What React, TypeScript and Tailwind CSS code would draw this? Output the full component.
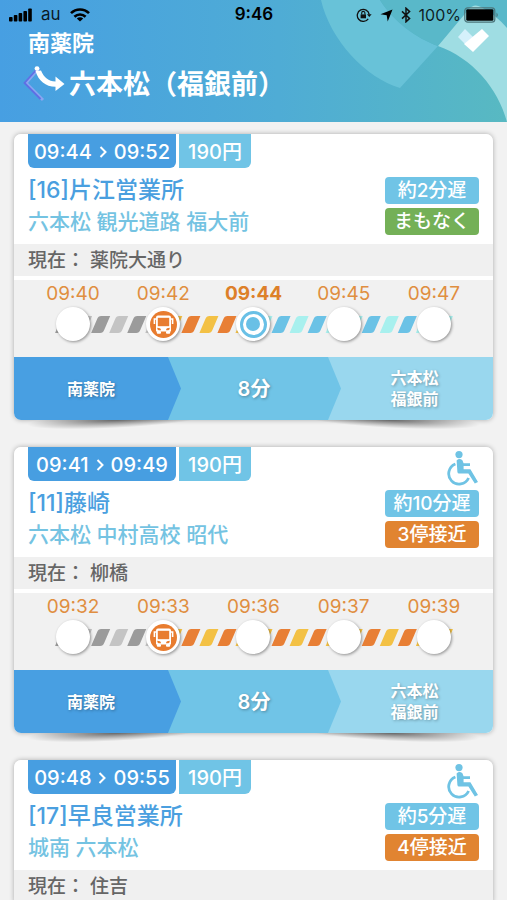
type Stop = {
  time: string;
  bus?: boolean;
  boarding?: boolean;
};

type Trip = {
  departs: string;
  arrives: string;
  fare: string;
  line: string;
  via: string;
  delay: string;
  status: string;
  soon?: boolean;
  wheelchair?: boolean;
  current: string;
  stops?: Stop[];
};

const trips: Trip[] = [
  {
    departs: "09:44",
    arrives: "09:52",
    fare: "190円",
    line: "[16]片江営業所",
    via: "六本松 観光道路 福大前",
    delay: "約2分遅",
    status: "まもなく",
    soon: true,
    current: "薬院大通り",
    stops: [
      { time: "09:40" },
      { time: "09:42", bus: true },
      { time: "09:44", boarding: true },
      { time: "09:45" },
      { time: "09:47" },
    ],
  },
  {
    departs: "09:41",
    arrives: "09:49",
    fare: "190円",
    line: "[11]藤崎",
    via: "六本松 中村高校 昭代",
    delay: "約10分遅",
    status: "3停接近",
    wheelchair: true,
    current: "柳橋",
    stops: [
      { time: "09:32" },
      { time: "09:33", bus: true },
      { time: "09:36" },
      { time: "09:37" },
      { time: "09:39" },
    ],
  },
  {
    departs: "09:48",
    arrives: "09:55",
    fare: "190円",
    line: "[17]早良営業所",
    via: "城南 六本松",
    delay: "約5分遅",
    status: "4停接近",
    wheelchair: true,
    current: "住吉",
  },
];

// [main, alternate] stripe colours
const PASSED = ["#9b9b9b", "#c4c4c4"];
const COMING = ["#e87f35", "#f3c145"];
const AHEAD = ["#6bc2e6", "#a8f0ee"];

function SignalIcon() {
  return (
    <svg viewBox="0 0 23 14" className="h-[14px] w-[23px]" aria-hidden="true">
      <rect x="0" y="9" width="3.6" height="4.5" rx="0.8" />
      <rect x="4.8" y="7" width="3.6" height="6.5" rx="0.8" />
      <rect x="9.6" y="5" width="3.6" height="8.5" rx="0.8" />
      <rect x="14.4" y="3" width="3.6" height="10.5" rx="0.8" />
      <rect x="19.2" y="0.5" width="3.6" height="13" rx="0.8" />
    </svg>
  );
}

function WifiIcon() {
  return (
    <svg viewBox="0 0 20 14" className="h-[14px] w-5" fill="none" stroke="#000" strokeWidth="2.6" aria-hidden="true">
      <path d="M1 5.2C6 0.2 14 0.2 19 5.2" />
      <path d="M4.4 8.8C7.6 5.7 12.4 5.7 15.6 8.8" />
      <path d="M10 13.6L6.8 10.4C8.6 8.8 11.4 8.8 13.2 10.4Z" fill="#000" stroke="none" />
    </svg>
  );
}

function LockIcon() {
  return (
    <svg viewBox="0 0 16 14" className="h-[14px] w-4" fill="none" stroke="#111" strokeWidth="1.3" aria-hidden="true">
      <path d="M12.2 10.8A6 6 0 1 1 13.2 6.4" />
      <path d="M11 6.2H15.6L13.3 9Z" fill="#111" stroke="none" />
      <rect x="4.6" y="6.4" width="5.4" height="3.9" fill="#111" stroke="none" />
      <path d="M5.7 6.4V5A1.6 1.6 0 0 1 8.9 5V6.4" strokeWidth="1.1" />
    </svg>
  );
}

function StatusBar() {
  return (
    <div className="grid h-[30px] grid-cols-3 items-center pr-[8px] pl-[9px] text-[17px] text-black/85">
      <div className="flex items-center gap-[9px]">
        <SignalIcon />
        <span>au</span>
        <WifiIcon />
      </div>
      <div className="text-center font-semibold text-black">9:46</div>
      <div className="flex items-center justify-end">
        <LockIcon />
        <svg viewBox="0 0 14 14" className="ml-2 h-[13px] w-[13px]" fill="#000" aria-hidden="true">
          <path d="M13.5 0.5L8.3 13.5L7.2 6.8L0.5 5.7Z" />
        </svg>
        <svg viewBox="0 0 10 16" className="ml-[6px] h-4 w-[14px]" fill="none" stroke="#111" strokeWidth="1.5" aria-hidden="true">
          <path d="M1 4.4L8.6 11.4L5 14.8V1.2L8.6 4.6L1 11.6" />
        </svg>
        <span className="ml-[6px] text-[16px]">100%</span>
        <svg viewBox="0 0 35 16" className="ml-[3px] h-4 w-[35px] shrink-0" aria-hidden="true">
          <rect x="0.8" y="0.8" width="30" height="14.4" rx="3" fill="none" stroke="#4c757b" strokeWidth="1.2" />
          <rect x="2.2" y="2.2" width="27.2" height="11.6" rx="1.4" />
          <path d="M32.5 5.5Q35 8 32.5 10.5Z" fill="#4c757b" />
        </svg>
      </div>
    </div>
  );
}

function Header() {
  return (
    <header className="relative h-[122px] bg-linear-to-r from-[#479fe2] via-[#4facd5] via-55% to-[#58b9c2] text-white">
      <svg
        viewBox="0 0 187 122"
        className="absolute top-0 right-0 h-[122px] w-[187px]"
        aria-hidden="true"
      >
        <path d="M1 0H60C73 21 96 38 118 46L80 88C46 78 10 40 1 0Z" fill="#68c2d8" />
        <path d="M60 0H187V30L153 6L118 46C96 38 73 21 60 0Z" fill="#59b8c9" />
        <path d="M118 46L149 9Q154 3 161 7Q176 15 187 28V122C178 88 152 58 118 46Z" fill="#9fdde3" />
        <path d="M138 37L145 29L153 37L145 44Z" fill="#d5f1fb" />
        <path d="M144 44L162 29L169 36L153 52Z" fill="#fff" />
      </svg>
      <div className="relative">
        <StatusBar />
        <h1 className="pl-[28px]">
          <span className="block text-[22px] leading-[26px] font-semibold">南薬院</span>
          <span className="flex h-[56px] items-center">
            <button type="button" aria-label="戻る" className="mr-[3px] -ml-[6px]">
              <svg viewBox="0 0 44 36" className="h-9 w-11" aria-hidden="true">
                <path d="M17 2L4 17L21 34" fill="none" stroke="#8aa6f0" strokeWidth="3" />
                <path d="M15 3L2.5 17L18.5 33" fill="none" stroke="#5f6fe4" strokeWidth="1.8" />
                <circle cx="15" cy="2.6" r="2.4" fill="#fff" />
                <path d="M13.5 5L19 4.4C22 11.5 26.5 15 33.5 15.6V10.6L42.5 18L33.5 25V20.8C23.5 20.6 16.5 15 13.5 5Z" fill="#fff" />
              </svg>
            </button>
            <span className="pt-[2px] text-[27px] leading-[40px] font-semibold">六本松（福銀前）</span>
          </span>
        </h1>
      </div>
    </header>
  );
}

function WheelchairIcon() {
  return (
    <svg viewBox="0 0 34 36" className="h-9 w-[34px]" fill="none" stroke="#6fc3e4" role="img" aria-label="車いす対応">
      <circle cx="14" cy="4.6" r="3.6" fill="#6fc3e4" stroke="none" />
      <path d="M10.4 14A10.4 10.4 0 1 0 23.6 28" strokeWidth="2.8" />
      <path d="M11.6 10.4Q14.4 7.8 17.4 10.2L18.6 13.2H25V16H18.6V19.2H25.4L33 32L29.8 33.6L23.4 23.6H14Q12.6 23.6 12.4 22Z" fill="#6fc3e4" stroke="none" />
    </svg>
  );
}

function BusIcon() {
  return (
    <svg viewBox="0 0 27 27" className="h-[27px] w-[27px]" role="img" aria-label="バス">
      <circle cx="13.5" cy="13.5" r="13.5" fill="#e87c2f" />
      <path d="M6 6.5Q6 4.6 8 4.6H19Q21 4.6 21 6.5V20.6H6Z" fill="#fff" />
      <rect x="7.8" y="6.8" width="11.4" height="8.4" fill="#e87c2f" />
      <path d="M6 8H4.4V13M21 8H22.6V13" fill="none" stroke="#fff" strokeWidth="1.6" />
      <rect x="6.8" y="20" width="4.2" height="2.8" rx="1" fill="#fff" />
      <rect x="16" y="20" width="4.2" height="2.8" rx="1" fill="#fff" />
      <path d="M7.2 16.8Q10.8 16.8 11 19.2H8.6Q7.2 19.2 7.2 16.8Z" fill="#e87c2f" />
      <path d="M19.8 16.8Q16.2 16.8 16 19.2H18.4Q19.8 19.2 19.8 16.8Z" fill="#e87c2f" />
    </svg>
  );
}

function Track({ stops }: { stops: Stop[] }) {
  const bus = stops.findIndex((s) => s.bus);
  const boarding = stops.findIndex((s) => s.boarding);
  const lastComing = boarding === -1 ? stops.length : boarding;

  const stripes = [{ x: 27, color: PASSED[0] }];
  stops.forEach((_, i) => {
    const colors = i < bus ? PASSED : i < lastComing ? COMING : AHEAD;
    const count = i === stops.length - 1 ? 1 : 5;
    for (let n = 0; n < count; n++) {
      stripes.push({ x: 45 + i * 90 + n * 18, color: colors[n % 2 ? 0 : 1] });
    }
  });

  return (
    <svg viewBox="0 0 450 17" preserveAspectRatio="none" className="absolute top-[9px] left-0 h-[17px] w-full" aria-hidden="true">
      {stripes.map(({ x, color }, i) => (
        <path
          key={i}
          d={`M${x} 17L${x + 6} 3Q${x + 7} 0 ${x + 10} 0H${x + 19}L${x + 13} 14Q${x + 12} 17 ${x + 9} 17Z`}
          fill={color}
        />
      ))}
    </svg>
  );
}

function Timeline({ stops }: { stops: Stop[] }) {
  return (
    <div className="h-[77px] bg-[#f1f1f1] px-[14px] pt-[2px]">
      <ol className="relative grid grid-cols-5">
        <li className="absolute inset-x-0 top-[25px]" aria-hidden="true">
          <Track stops={stops} />
        </li>
        {stops.map((stop) => (
          <li key={stop.time} className="relative flex flex-col items-center">
            <span
              className={`text-[19px] leading-[24px] ${
                stop.boarding ? "font-bold text-[#dd8029]" : "text-[#e08e40]"
              }`}
            >
              {stop.time}
            </span>
            <span className="mt-px flex h-[34px] w-[34px] items-center justify-center rounded-full bg-white shadow-[1px_1px_3px_rgba(0,0,0,0.4)]">
              {stop.bus && <BusIcon />}
              {stop.boarding && (
                <span className="flex h-[27px] w-[27px] items-center justify-center rounded-full border-[3px] border-[#69c0e6]">
                  <span className="h-[14px] w-[14px] rounded-full bg-[#69c0e6]" />
                </span>
              )}
            </span>
          </li>
        ))}
      </ol>
    </div>
  );
}

function RouteBar() {
  return (
    <div className="grid h-[63px] grid-cols-[154fr_160fr_165fr] text-center font-semibold text-white text-shadow-[1px_1px_3px_rgba(0,0,0,0.3)]">
      <div className="relative z-20 flex items-center justify-center bg-[#489fe2] text-[16px]">
        南薬院
        <span className="absolute top-0 left-full h-full w-[13px] bg-[#489fe2] [clip-path:polygon(0_0,100%_50%,0_100%)]" />
      </div>
      <div className="relative z-10 flex items-center justify-center bg-[#70c4e7] pl-3 text-[20px]">
        8分
        <span className="absolute top-0 left-full h-full w-[13px] bg-[#70c4e7] [clip-path:polygon(0_0,100%_50%,0_100%)]" />
      </div>
      <div className="flex items-center justify-center bg-[#99d7ee] pl-2 text-[16px] leading-[21px]">
        六本松
        <br />
        福銀前
      </div>
    </div>
  );
}

function TripCard({ trip }: { trip: Trip }) {
  return (
    <article className="relative isolate">
      {/* lifted corner shadows */}
      <span className="absolute -bottom-2 left-[12px] -z-10 h-4 w-[38%] -rotate-3 bg-radial from-black/50 to-transparent to-70%" />
      <span className="absolute right-[12px] -bottom-2 -z-10 h-4 w-[38%] rotate-3 bg-radial from-black/50 to-transparent to-70%" />
      <div className="rounded-[7px] shadow-[0_0_5px_rgba(0,0,0,0.3)]">
        <div className="overflow-hidden rounded-[7px] bg-white">
          <div className="flex h-[110px] justify-between px-[14px]">
            <div>
              <div className="flex h-[34px] gap-[3px] font-medium text-white">
                <div className="flex w-[148px] items-center justify-center gap-[7px] rounded-b-[6px] bg-[#479ee1] pt-[2px] text-[20px]">
                  {trip.departs}
                  <svg viewBox="0 0 8 12" className="h-3 w-2" fill="none" stroke="#fff" strokeWidth="2" aria-hidden="true">
                    <path d="M1.5 1L6.5 6L1.5 11" />
                  </svg>
                  {trip.arrives}
                </div>
                <div className="flex w-[72px] items-center justify-center rounded-br-[6px] bg-[#70c4e6] pt-[2px] text-[20px]">
                  {trip.fare}
                </div>
              </div>
              <h2 className="mt-[6px] text-[23px] leading-[32px] font-medium text-[#4a9fdf]">
                {trip.line}
              </h2>
              <p className="text-[21px] leading-[32px] font-medium text-[#74c3e2]">{trip.via}</p>
            </div>
            <div className="flex w-[94px] flex-col items-end gap-1">
              <div className="flex h-[39px] items-end">{trip.wheelchair && <WheelchairIcon />}</div>
              <span className="flex h-[27px] w-full items-center justify-center rounded-[4px] bg-[#70c4e6] pt-[2px] text-[19px] font-medium text-white">
                {trip.delay}
              </span>
              <span
                className={`flex h-[27px] w-full items-center justify-center rounded-[4px] pt-[2px] text-[19px] font-medium text-white ${
                  trip.soon ? "bg-[#74b057]" : "bg-[#e18431]"
                }`}
              >
                {trip.status}
              </span>
            </div>
          </div>
          <p className="mb-1 h-8 bg-[#f0f0f0] px-[14px] pt-px text-[19px] leading-8 font-medium text-[#666]">
            現在： {trip.current}
          </p>
          {trip.stops && (
            <>
              <Timeline stops={trip.stops} />
              <RouteBar />
            </>
          )}
        </div>
      </div>
    </article>
  );
}

export default function App() {
  return (
    <div className="h-screen overflow-hidden bg-[#f2f2f2] font-['Inter','Noto_Sans_CJK_JP',sans-serif]" lang="ja">
      <Header />
      <main className="flex flex-col gap-[27px] px-[14px] pt-3">
        {trips.map((trip) => (
          <TripCard key={trip.line} trip={trip} />
        ))}
      </main>
    </div>
  );
}
